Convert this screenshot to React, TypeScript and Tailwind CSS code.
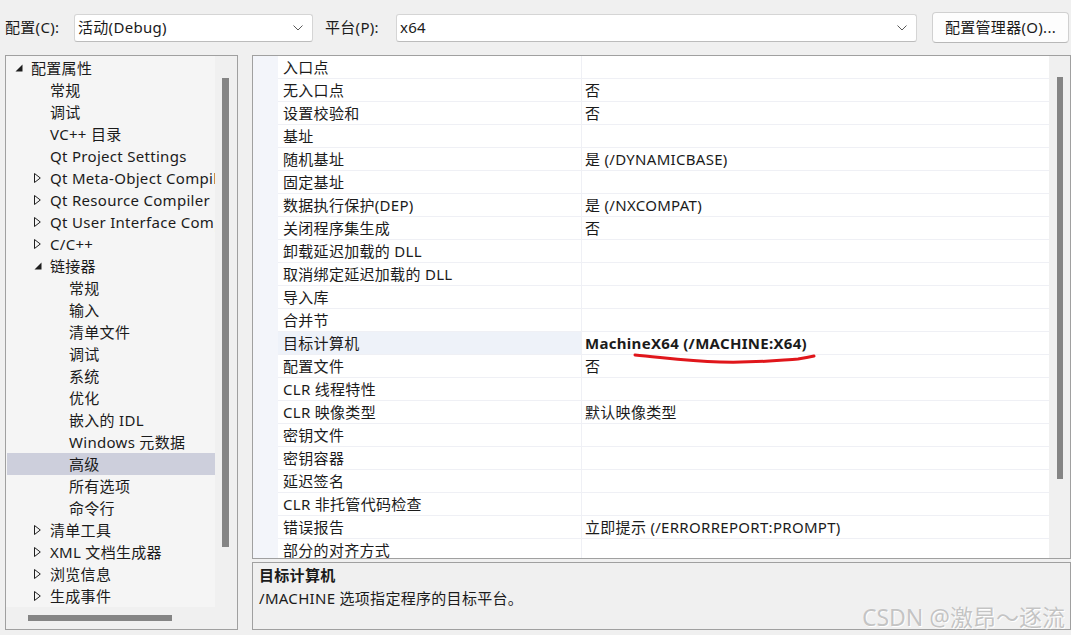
import React from "react";

const FONT = { fontFamily: '"Noto Sans", "Noto Sans CJK SC", sans-serif' };

type Node = { label: string; level: number; exp?: "open" | "closed"; sel?: boolean };

const tree: Node[] = [
  { label: "配置属性", level: 0, exp: "open" },
  { label: "常规", level: 1 },
  { label: "调试", level: 1 },
  { label: "VC++ 目录", level: 1 },
  { label: "Qt Project Settings", level: 1 },
  { label: "Qt Meta-Object Compiler", level: 1, exp: "closed" },
  { label: "Qt Resource Compiler", level: 1, exp: "closed" },
  { label: "Qt User Interface Compiler", level: 1, exp: "closed" },
  { label: "C/C++", level: 1, exp: "closed" },
  { label: "链接器", level: 1, exp: "open" },
  { label: "常规", level: 2 },
  { label: "输入", level: 2 },
  { label: "清单文件", level: 2 },
  { label: "调试", level: 2 },
  { label: "系统", level: 2 },
  { label: "优化", level: 2 },
  { label: "嵌入的 IDL", level: 2 },
  { label: "Windows 元数据", level: 2 },
  { label: "高级", level: 2, sel: true },
  { label: "所有选项", level: 2 },
  { label: "命令行", level: 2 },
  { label: "清单工具", level: 1, exp: "closed" },
  { label: "XML 文档生成器", level: 1, exp: "closed" },
  { label: "浏览信息", level: 1, exp: "closed" },
  { label: "生成事件", level: 1, exp: "closed" },
];

const rows: { name: string; value: string; sel?: boolean }[] = [
  { name: "入口点", value: "" },
  { name: "无入口点", value: "否" },
  { name: "设置校验和", value: "否" },
  { name: "基址", value: "" },
  { name: "随机基址", value: "是 (/DYNAMICBASE)" },
  { name: "固定基址", value: "" },
  { name: "数据执行保护(DEP)", value: "是 (/NXCOMPAT)" },
  { name: "关闭程序集生成", value: "否" },
  { name: "卸载延迟加载的 DLL", value: "" },
  { name: "取消绑定延迟加载的 DLL", value: "" },
  { name: "导入库", value: "" },
  { name: "合并节", value: "" },
  { name: "目标计算机", value: "MachineX64 (/MACHINE:X64)", sel: true },
  { name: "配置文件", value: "否" },
  { name: "CLR 线程特性", value: "" },
  { name: "CLR 映像类型", value: "默认映像类型" },
  { name: "密钥文件", value: "" },
  { name: "密钥容器", value: "" },
  { name: "延迟签名", value: "" },
  { name: "CLR 非托管代码检查", value: "" },
  { name: "错误报告", value: "立即提示 (/ERRORREPORT:PROMPT)" },
  { name: "部分的对齐方式", value: "" },
];

function Chevron() {
  return (
    <svg width="10" height="6" viewBox="0 0 10 6" className="shrink-0">
      <path d="M0.5 0.5 L5 5 L9.5 0.5" fill="none" stroke="#5a5a5a" strokeWidth="1" />
    </svg>
  );
}

function Expander({ kind }: { kind: "open" | "closed" }) {
  if (kind === "open") {
    return (
      <svg width="8" height="8" viewBox="0 0 8 8">
        <path d="M7.5 0.5 L7.5 7.5 L0.5 7.5 Z" fill="#1e1e1e" />
      </svg>
    );
  }
  return (
    <svg width="7" height="10" viewBox="0 0 7 10">
      <path d="M0.5 0.5 L6.3 5 L0.5 9.5 Z" fill="none" stroke="#1e1e1e" strokeWidth="1" />
    </svg>
  );
}

function Combo({ text, w }: { text: string; w: string }) {
  return (
    <div
      className={`${w} h-[28px] bg-white border border-[#d5d5d5] border-b-[#bcbcbc] rounded-[3px] flex items-center pl-[3px] pr-[9px] justify-between`}
    >
      <span className="text-[15px] text-[#1b1b1b] leading-none">{text}</span>
      <Chevron />
    </div>
  );
}

export default function App() {
  return (
    <div
      className="relative w-[1071px] h-[635px] bg-[#f0f0f0] overflow-hidden text-[#1b1b1b] tracking-[0.3px]"
      style={FONT}
    >
      {/* top bar */}
      <div className="h-[55px] flex items-center pl-[5px]">
        <span className="w-[69px] text-[15px]">配置(C):</span>
        <Combo text="活动(Debug)" w="w-[239px]" />
        <span className="ml-[12px] w-[71px] text-[15px]">平台(P):</span>
        <Combo text="x64" w="w-[521px]" />
        <button className="ml-[15px] w-[137px] h-[31px] bg-[#fdfdfd] border border-[#d0d0d0] border-b-[#b8b8b8] rounded-[4px] text-[15px] text-[#1b1b1b]">
          配置管理器(O)...
        </button>
      </div>

      {/* main */}
      <div className="flex">
        {/* left tree panel */}
        <div className="ml-[5px] w-[233px] h-[575px] border border-[#a0a0a0] flex flex-col">
          <div className="flex h-[551px]">
            <div className="w-[209px] bg-[#f5f5f5] pt-[1px] pl-[1px] overflow-hidden">
              {tree.map((n, i) => (
                <div
                  key={i}
                  className={`h-[22px] flex items-center whitespace-nowrap text-[15px] ${n.sel ? "bg-[#cdcfdc]" : ""}`}
                >
                  <div className="shrink-0" style={{ width: 8 + n.level * 19 }} />
                  <div className="w-[16px] shrink-0 flex items-center">
                    {n.exp ? <Expander kind={n.exp} /> : null}
                  </div>
                  <span>{n.label}</span>
                </div>
              ))}
            </div>
            <div className="w-[22px] bg-[#f0f0f0] pl-[7px] pt-[22px]">
              <div className="w-[7px] h-[469px] bg-[#858585]" />
            </div>
          </div>
          <div className="h-[22px] pt-[8px] pl-[22px]">
            <div className="w-[144px] h-[6px] bg-[#858585]" />
          </div>
        </div>

        {/* right column */}
        <div className="ml-[14px] w-[819px] flex flex-col">
          <div className="h-[504px] border border-[#a0a0a0] flex bg-white">
            <div className="w-[25px] bg-[#f3f5fa]" />
            <div className="w-[771px] overflow-hidden">
              {rows.map((r, i) => (
                <div key={i} className="h-[23px] flex border-b border-[#eff0f5]">
                  <div
                    className={`w-[304px] pl-[5px] flex items-center text-[15px] whitespace-nowrap border-r border-[#eff0f5] ${r.sel ? "bg-[#eef2f9]" : ""}`}
                  >
                    {r.name}
                  </div>
                  <div
                    className={`flex-1 pl-[3px] flex items-center text-[15px] whitespace-nowrap ${r.sel ? "font-bold" : ""}`}
                  >
                    {r.value}
                  </div>
                </div>
              ))}
            </div>
            <div className="w-[21px] bg-[#f0f0f0] pl-[8px] pt-[21px]">
              <div className="w-[6px] h-[402px] bg-[#858585]" />
            </div>
          </div>
          <div className="mt-[3px] h-[68px] border border-[#a0a0a0] bg-[#f0f0f0] pl-[6px] pt-[1px]">
            <div className="h-[23px] flex items-center font-bold text-[15px]">目标计算机</div>
            <div className="h-[23px] flex items-center text-[15px]">/MACHINE 选项指定程序的目标平台。</div>
          </div>
        </div>
      </div>

      {/* red hand-drawn underline */}
      <svg className="absolute left-[630px] top-[350px]" width="190" height="18" viewBox="0 0 190 18">
        <path
          d="M5 5 C 30 7, 55 11, 90 12 C 130 13, 150 10, 168 9 C 175 8, 180 7, 184 6"
          fill="none"
          stroke="#e0161b"
          strokeWidth="3"
          strokeLinecap="round"
        />
      </svg>

      {/* watermark */}
      <div
        className="absolute right-[6px] top-[602px] text-[23px] leading-[30px] tracking-normal text-[#c4c4c4] whitespace-nowrap"
        style={{ textShadow: "0 0 1px #ffffff, 1px 1px 0 #ffffff" }}
      >
        CSDN @激昂～逐流
      </div>
    </div>
  );
}
